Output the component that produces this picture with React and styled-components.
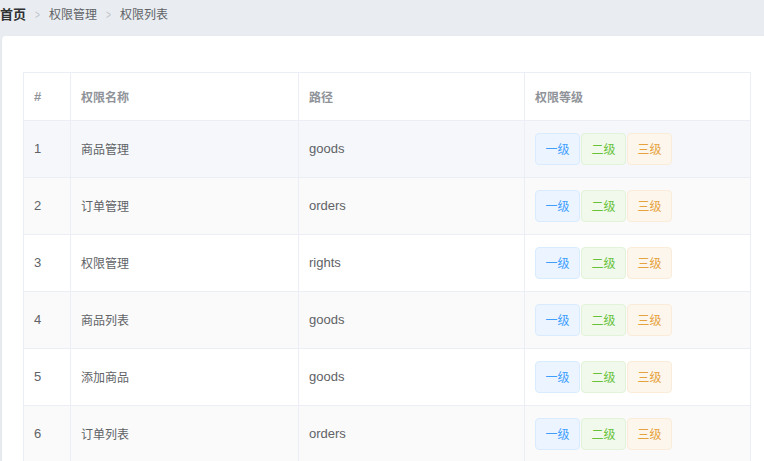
import React from 'react';
import styled, { createGlobalStyle } from 'styled-components';

const GlobalStyle = createGlobalStyle`
  html, body {
    margin: 0;
    padding: 0;
    background-color: #e9edf1;
    overflow: hidden;
  }
  body {
    font-family: "Liberation Sans", "Noto Sans CJK SC", sans-serif;
    font-size: 14px;
    color: #606266;
  }
`;

const RIGHTS = [
  { id: 1, name: '商品管理', path: 'goods' },
  { id: 2, name: '订单管理', path: 'orders' },
  { id: 3, name: '权限管理', path: 'rights' },
  { id: 4, name: '商品列表', path: 'goods' },
  { id: 5, name: '添加商品', path: 'goods' },
  { id: 6, name: '订单列表', path: 'orders' },
];

const LEVELS = [
  { label: '一级', type: 'primary' },
  { label: '二级', type: 'success' },
  { label: '三级', type: 'warning' },
];

const TAG_COLORS = {
  primary: { bg: '#ecf5ff', border: '#d9ecff', color: '#409eff' },
  success: { bg: '#f0f9eb', border: '#e1f3d8', color: '#67c23a' },
  warning: { bg: '#fdf6ec', border: '#faecd8', color: '#e6a23c' },
};

const Breadcrumbs = ({ items }) => (
  <Breadcrumb>
    {items.map((item, i) => (
      <React.Fragment key={item}>
        {i > 0 && <Separator>&gt;</Separator>}
        <Crumb $first={i === 0}>{item}</Crumb>
      </React.Fragment>
    ))}
  </Breadcrumb>
);

export default function App() {
  return (
    <Page>
      <GlobalStyle />
      <Breadcrumbs items={['首页', '权限管理', '权限列表']} />
      <Card>
        <Table>
          <colgroup>
            <col style={{ width: 47 }} />
            <col style={{ width: 228 }} />
            <col style={{ width: 226 }} />
            <col style={{ width: 226 }} />
          </colgroup>
          <thead>
            <tr>
              <HeadCell>#</HeadCell>
              <HeadCell $cjk>权限名称</HeadCell>
              <HeadCell $cjk>路径</HeadCell>
              <HeadCell $cjk>权限等级</HeadCell>
            </tr>
          </thead>
          <tbody>
            {RIGHTS.map((r, i) => (
              <Row key={r.id} $striped={i % 2 === 1} $hover={i === 0}>
                <Cell>{r.id}</Cell>
                <Cell $cjk>{r.name}</Cell>
                <Cell>{r.path}</Cell>
                <Cell>
                  <Tags>
                    {LEVELS.map(l => (
                      <Tag key={l.type} $type={l.type}>{l.label}</Tag>
                    ))}
                  </Tags>
                </Cell>
              </Row>
            ))}
          </tbody>
        </Table>
      </Card>
    </Page>
  );
}

const Page = styled.div`
  width: 764px;
  height: 461px;
  overflow: hidden;
`;

const Breadcrumb = styled.div`
  display: flex;
  align-items: center;
  height: 30px;
  line-height: 16px;
`;

const Crumb = styled.span`
  color: ${p => (p.$first ? '#303133' : '#606266')};
  font-weight: ${p => (p.$first ? 700 : 400)};
  font-size: ${p => (p.$first ? 13 : 12)}px;
`;

const Separator = styled.span`
  color: #c0c4cc;
  margin: 0 8px;
  font-size: 12px;
  transform: scaleX(0.7);
`;

const Card = styled.div`
  margin: 6px 0 0 2px;
  width: 768px;
  box-sizing: border-box;
  padding: 36px 20px 20px 21px;
  background: #fff;
  border-radius: 4px;
  box-shadow: 0 1px 3px rgba(0, 0, 0, 0.06);
`;

const Table = styled.table`
  width: 728px;
  table-layout: fixed;
  border-collapse: collapse;
  border: 1px solid #ebeef5;
`;

const HeadCell = styled.th`
  height: 46px;
  padding: 0 10px 1px;
  text-align: left;
  font-size: ${p => (p.$cjk ? 12 : 13)}px;
  font-weight: 700;
  color: #909399;
  border: 1px solid #ebeef5;
`;

const Row = styled.tr`
  background: ${p => (p.$hover ? '#f5f7fa' : p.$striped ? '#fafafa' : '#fff')};
`;

const Cell = styled.td`
  height: 54px;
  padding: 0 10px 2px;
  font-size: ${p => (p.$cjk ? 12 : 13)}px;
  color: #606266;
  border: 1px solid #ebeef5;
`;

const Tags = styled.div`
  display: flex;
  gap: 1px;
  margin-top: 1px;
`;

const Tag = styled.span`
  display: inline-flex;
  align-items: center;
  justify-content: center;
  box-sizing: border-box;
  width: 45px;
  height: 32px;
  font-size: 12px;
  border-radius: 4px;
  background: ${p => TAG_COLORS[p.$type].bg};
  border: 1px solid ${p => TAG_COLORS[p.$type].border};
  color: ${p => TAG_COLORS[p.$type].color};
`;
